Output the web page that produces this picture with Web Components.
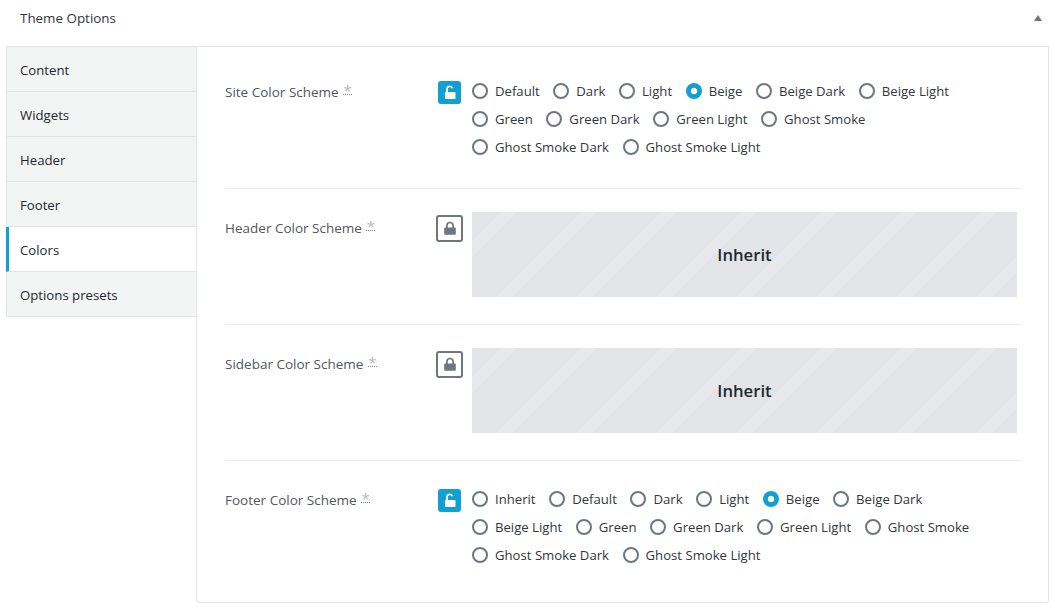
<!DOCTYPE html>
<html>
<head>
<meta charset="utf-8">
<title>Theme Options</title>
<style>
  html, body { margin: 0; background: #fff; }
  body { font-family: "Open Sans", "Noto Sans", sans-serif; font-size: 13px; color: #32373c; }
</style>
</head>
<body>
<theme-options>
  <option-tab>Content</option-tab>
  <option-tab>Widgets</option-tab>
  <option-tab>Header</option-tab>
  <option-tab>Footer</option-tab>
  <option-tab active>Colors</option-tab>
  <option-tab>Options presets</option-tab>

  <option-row label="Site Color Scheme" unlocked first
    options="Default|Dark|Light|Beige|Beige Dark|Beige Light|Green|Green Dark|Green Light|Ghost Smoke|Ghost Smoke Dark|Ghost Smoke Light"
    selected="Beige"></option-row>
  <option-row label="Header Color Scheme"></option-row>
  <option-row label="Sidebar Color Scheme"></option-row>
  <option-row label="Footer Color Scheme" unlocked last
    options="Inherit|Default|Dark|Light|Beige|Beige Dark|Beige Light|Green|Green Dark|Green Light|Ghost Smoke|Ghost Smoke Dark|Ghost Smoke Light"
    selected="Beige"></option-row>
</theme-options>

<script>
class ThemeOptions extends HTMLElement {
  constructor() {
    super();
    this.attachShadow({ mode: 'open' });
    this.shadowRoot.innerHTML = `
      <style>
        :host { display: block; height: 612px; overflow: hidden; }
        .head {
          height: 46px;
          display: flex;
          align-items: center;
          justify-content: space-between;
          padding: 8px 13px 18px 20px;
          box-sizing: border-box;
          font-size: 13.4px;
          color: #32373c;
        }
        .arrow {
          width: 0; height: 0;
          border-left: 4px solid transparent;
          border-right: 4px solid transparent;
          border-bottom: 6px solid #72777c;
        }
        .body { display: flex; padding-left: 6px; padding-right: 6px; }
        .tabs { width: 190px; flex: none; display: flex; flex-direction: column; }
        .panel {
          flex: 1;
          height: 557px;
          box-sizing: border-box;
          background: #fff;
          border: 1px solid #e2e4e7;
          border-radius: 0 0 3px 3px;
          padding: 0 28px;
        }
      </style>
      <div class="head"><span>Theme Options</span><span class="arrow"></span></div>
      <div class="body">
        <div class="tabs"><slot name="tabs"></slot></div>
        <div class="panel"><slot></slot></div>
      </div>
    `;
  }

  connectedCallback() {
    this.querySelectorAll('option-tab').forEach(t => t.slot = 'tabs');
  }
}

class OptionTab extends HTMLElement {
  constructor() {
    super();
    this.attachShadow({ mode: 'open' });
    this.shadowRoot.innerHTML = `
      <style>
        :host {
          display: flex;
          align-items: center;
          box-sizing: border-box;
          height: 45px;
          padding: 2px 0 0 13px;
          background: #f3f4f4;
          border: 1px solid #e2e4e7;
          border-top: 0;
          border-right: 0;
          font-size: 13.2px;
          color: #23282d;
        }
        :host(:first-child) { height: 46px; border-top: 1px solid #e2e4e7; }
        :host([active]) {
          background: #fff;
          border-left: 3px solid #11a0d2;
          padding-left: 11px;
        }
      </style>
      <slot></slot>
    `;
  }
}

class LockToggle extends HTMLElement {
  constructor() {
    super();
    this.attachShadow({ mode: 'open' });
  }

  connectedCallback() {
    const open = this.hasAttribute('unlocked');
    this.shadowRoot.innerHTML = `
      <style>
        :host {
          display: flex;
          align-items: center;
          justify-content: center;
          box-sizing: border-box;
          border-radius: 3px;
        }
        :host([unlocked]) { width: 23px; height: 23px; background: #11a0d2; color: #fff; margin-top: 4px; margin-left: 1px; }
        :host(:not([unlocked])) { width: 27px; height: 27px; border: 2px solid #6c7781; color: #6c7781; margin: 3px 0 0 -1px; }
        svg { display: block; }
      </style>
      ${open
        ? `<svg width="14" height="15" viewBox="0 0 14 15"><rect x="2" y="7" width="10.5" height="7" rx=".8" fill="currentColor"/><path d="M4 7.5V4a2.7 2.7 0 0 1 5.3-.7" fill="none" stroke="currentColor" stroke-width="1.8"/></svg>`
        : `<svg width="14" height="15" viewBox="0 0 14 15"><rect x="1.2" y="6.6" width="11.6" height="7.2" rx=".8" fill="currentColor"/><path d="M3.9 7V4.6a3.1 3.1 0 0 1 6.2 0V7" fill="none" stroke="currentColor" stroke-width="1.7"/></svg>`}
    `;
  }
}

class RadioGroup extends HTMLElement {
  constructor() {
    super();
    this.attachShadow({ mode: 'open' });
  }

  connectedCallback() {
    const selected = this.getAttribute('selected');
    const items = (this.getAttribute('options') || '').split('|').map(o => `
      <label class="item">
        <span class="dot ${o === selected ? 'on' : ''}"></span><span>${o}</span>
      </label>`).join('');
    this.shadowRoot.innerHTML = `
      <style>
        :host { display: flex; flex-wrap: wrap; column-gap: 13.6px; width: 540px; }
        .item { display: flex; align-items: center; height: 28px; color: #32373c; font-size: 13.15px; }
        .dot {
          width: 16px; height: 16px;
          box-sizing: border-box;
          border: 2px solid #6c7781;
          border-radius: 50%;
          margin-right: 7px;
          flex: none;
        }
        .dot.on { border: 0; background: radial-gradient(circle, #fff 0 3px, #11a0d2 3.6px); }
      </style>
      ${items}
    `;
  }
}

class OptionRow extends HTMLElement {
  constructor() {
    super();
    this.attachShadow({ mode: 'open' });
  }

  connectedCallback() {
    const options = this.getAttribute('options');
    const open = this.hasAttribute('unlocked');
    this.shadowRoot.innerHTML = `
      <style>
        :host {
          display: grid;
          grid-template-columns: 212px 35px 1fr;
          align-items: start;
          box-sizing: border-box;
          padding: 23px 0 27px;
          border-bottom: 1px solid #e8eaeb;
        }
        :host([first]) { padding-top: 30px; }
        :host([last]) { border-bottom: 0; padding-top: 24px; }
        .label { font-size: 13.5px; color: #50575e; line-height: 28px; margin-top: 1px; white-space: nowrap; }
        :host(:not([unlocked])) .label { margin-top: 2px; }
        .req {
          display: inline-block;
          width: 9px;
          margin-left: 1px;
          text-align: center;
          font-size: 15px;
          color: #b4b9be;
          border-bottom: 1px dotted #82878c;
          line-height: 7px;
          position: relative;
          top: -1px;
        }
        .inherit {
          width: 545px;
          height: 85px;
          display: flex;
          align-items: center;
          justify-content: center;
          font-size: 16.7px;
          font-weight: 600;
          color: #23282d;
          background: repeating-linear-gradient(135deg, #e2e4e7 0 21.2px, #e8e9ec 21.2px 31.8px, #e2e4e7 31.8px 56.57px);
        }
      </style>
      <div class="label">${this.getAttribute('label')} <span class="req">*</span></div>
      <lock-toggle ${open ? 'unlocked' : ''}></lock-toggle>
      ${options
        ? `<radio-group options="${options}" selected="${this.getAttribute('selected')}"></radio-group>`
        : `<div class="inherit">Inherit</div>`}
    `;
  }
}

customElements.define('theme-options', ThemeOptions);
customElements.define('option-tab', OptionTab);
customElements.define('lock-toggle', LockToggle);
customElements.define('radio-group', RadioGroup);
customElements.define('option-row', OptionRow);
</script>
</body>
</html>
